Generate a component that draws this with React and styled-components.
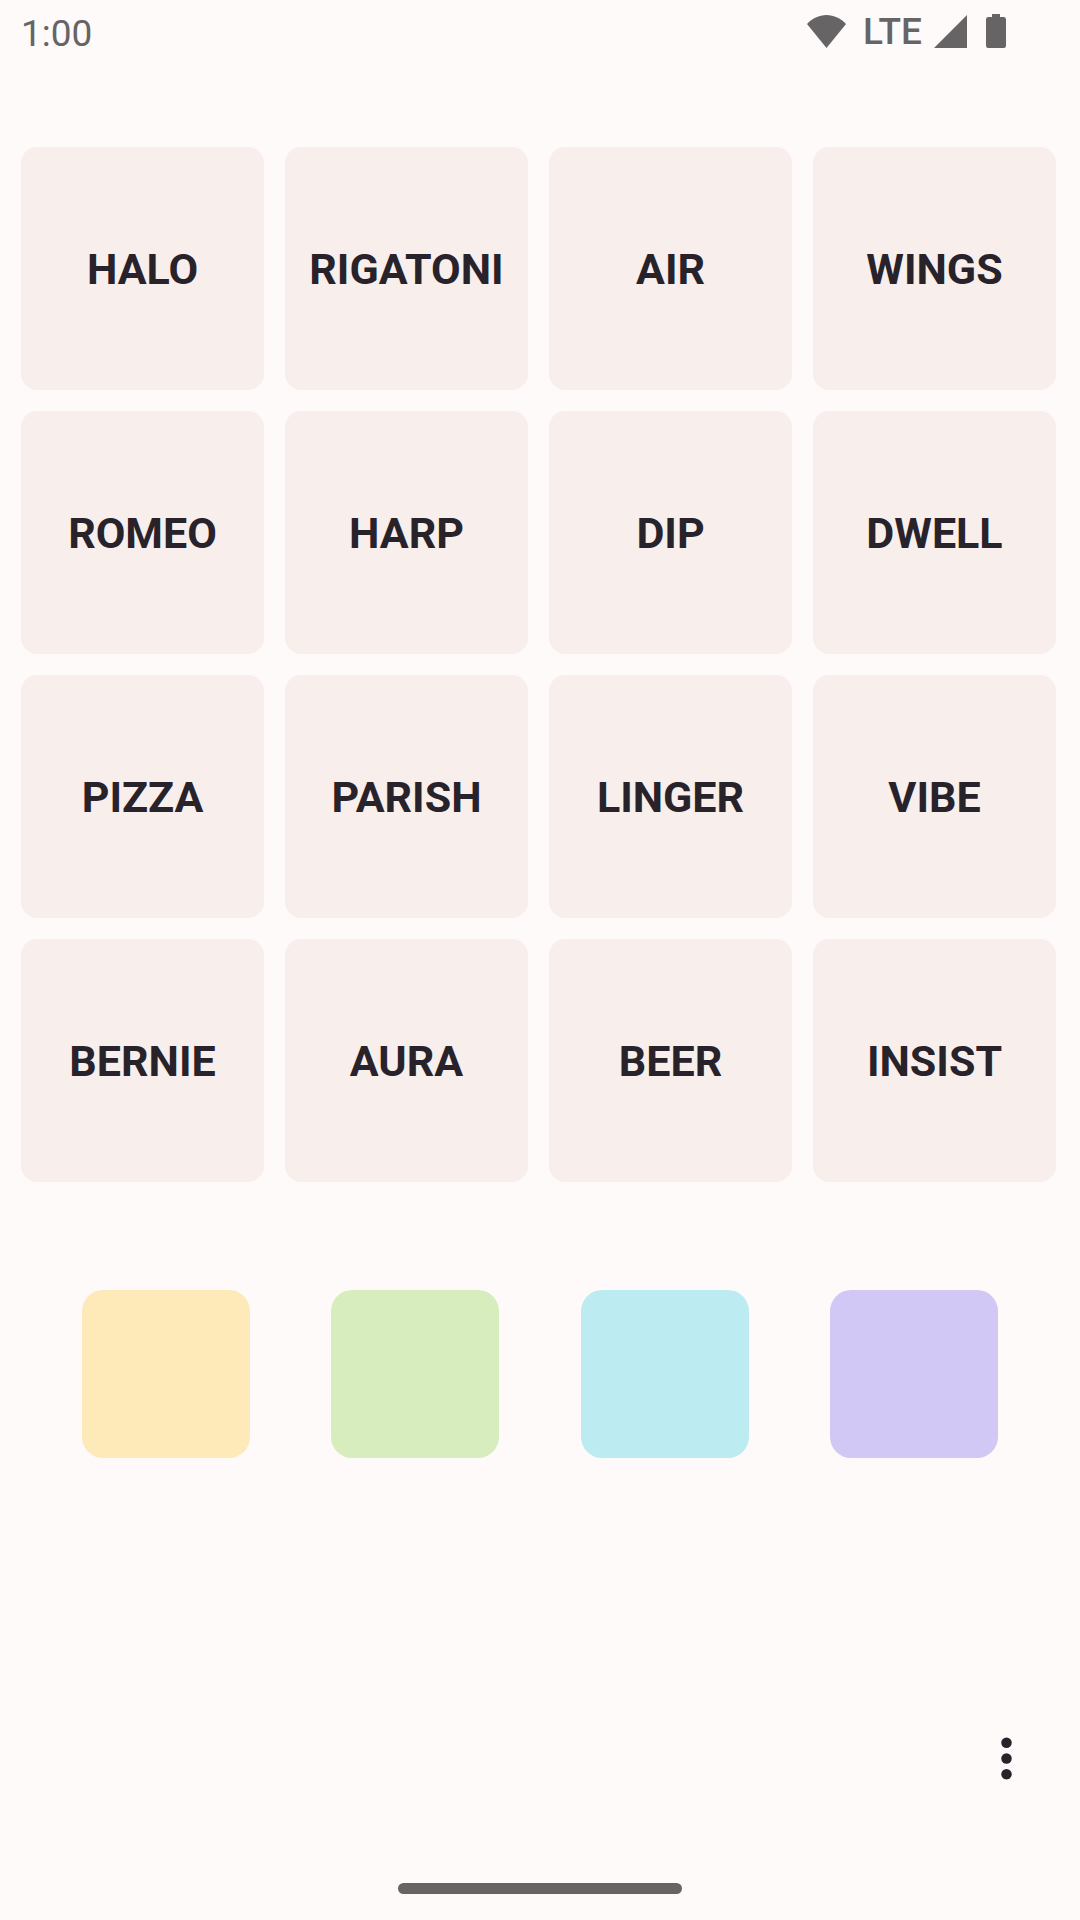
import React, { useState } from "react";
import styled, { createGlobalStyle } from "styled-components";

const GlobalStyle = createGlobalStyle`
  *, *::before, *::after { box-sizing: border-box; }
  body {
    margin: 0;
    background: #fffafa;
    color: #28232b;
    font-family: Roboto, "Liberation Sans", sans-serif;
  }
`;

const Screen = styled.div`
  display: flex;
  flex-direction: column;
  min-height: 100vh;
`;

const StatusBar = styled.header`
  display: flex;
  align-items: center;
  justify-content: space-between;
  height: 62px;
  padding: 0 74px 0 21px;
  color: #666464;
`;

const Clock = styled.time`
  font-size: 37px;
  line-height: 44px;
  padding-top: 6px;
`;

const StatusIcons = styled.div`
  display: flex;
  align-items: center;
`;

const Network = styled.span`
  font-size: 37px;
  font-weight: 500;
  line-height: 44px;
  padding-top: 2px;
  margin: 0 12px 0 17px;
`;

const Icon = styled.svg`
  display: block;
  fill: currentColor;
`;

const BatteryIcon = styled(Icon)`
  margin-left: 19px;
`;

const Board = styled.main`
  display: grid;
  grid-template-columns: repeat(4, 1fr);
  gap: 21px;
  padding: 85px 24px 0 21px;
`;

const Tile = styled.button`
  display: flex;
  align-items: center;
  justify-content: center;
  aspect-ratio: 1;
  min-width: 0;
  padding: 0;
  border: 0;
  border-radius: 16px;
  background: ${({ $selected }) => ($selected ? "#e8dcda" : "#f8eeec")};
  color: inherit;
  font: 700 43px/48px Roboto, "Liberation Sans", sans-serif;
  cursor: pointer;
`;

const Groups = styled.section`
  display: flex;
  justify-content: space-evenly;
  padding-top: 108px;
`;

const Swatch = styled.button`
  width: 168px;
  height: 168px;
  padding: 0;
  border: 0;
  border-radius: 21px;
  background: ${({ $color }) => $color};
  cursor: pointer;
`;

const Footer = styled.footer`
  display: flex;
  flex-direction: column;
  margin-top: auto;
  padding-bottom: 26px;
`;

const MenuButton = styled.button`
  display: grid;
  place-items: center;
  align-self: flex-end;
  width: 126px;
  height: 126px;
  margin: 0 11px 62px 0;
  padding: 0;
  border: 0;
  background: none;
  color: inherit;
  cursor: pointer;
`;

const HomeHandle = styled.div`
  align-self: center;
  width: 284px;
  height: 11px;
  border-radius: 6px;
  background: #666464;
`;

const words = [
  "HALO", "RIGATONI", "AIR", "WINGS",
  "ROMEO", "HARP", "DIP", "DWELL",
  "PIZZA", "PARISH", "LINGER", "VIBE",
  "BERNIE", "AURA", "BEER", "INSIST",
];

const groups = [
  { name: "Yellow", color: "#fee9b8" },
  { name: "Green", color: "#d8edbe" },
  { name: "Blue", color: "#bcecf1" },
  { name: "Purple", color: "#d1c8f5" },
];

export default function App() {
  const [selected, setSelected] = useState([]);
  const toggle = (word) =>
    setSelected((list) =>
      list.includes(word) ? list.filter((w) => w !== word) : [...list, word]
    );

  return (
    <>
      <GlobalStyle />
      <Screen>
        <StatusBar>
          <Clock>1:00</Clock>
          <StatusIcons>
            <Icon width="39" height="33" viewBox="0 0 39 33" aria-label="Wi-Fi">
              <path d="M0 9C5 3.500 12 0 19.500 0S34 3.500 39 9L19.500 33Z" />
            </Icon>
            <Network>LTE</Network>
            <Icon width="33" height="33" viewBox="0 0 33 33" aria-label="Signal">
              <path d="M33 0V33H0Z" />
            </Icon>
            <BatteryIcon width="20" height="34" viewBox="0 0 20 34" aria-label="Battery">
              <path d="M6 0h8v3h4Q20 3 20 5.500V31.500Q20 34 17.800 34H2.200Q0 34 0 31.500V5.500Q0 3 2 3H6Z" />
            </BatteryIcon>
          </StatusIcons>
        </StatusBar>

        <Board>
          {words.map((word) => (
            <Tile
              key={word}
              type="button"
              aria-pressed={selected.includes(word)}
              $selected={selected.includes(word)}
              onClick={() => toggle(word)}
            >
              {word}
            </Tile>
          ))}
        </Board>

        <Groups>
          {groups.map(({ name, color }) => (
            <Swatch key={name} type="button" aria-label={name} $color={color} />
          ))}
        </Groups>

        <Footer>
          <MenuButton type="button" aria-label="More options">
            <Icon width="63" height="63" viewBox="0 0 24 24">
              <circle cx="12" cy="6" r="2" />
              <circle cx="12" cy="12" r="2" />
              <circle cx="12" cy="18" r="2" />
            </Icon>
          </MenuButton>
          <HomeHandle />
        </Footer>
      </Screen>
    </>
  );
}
